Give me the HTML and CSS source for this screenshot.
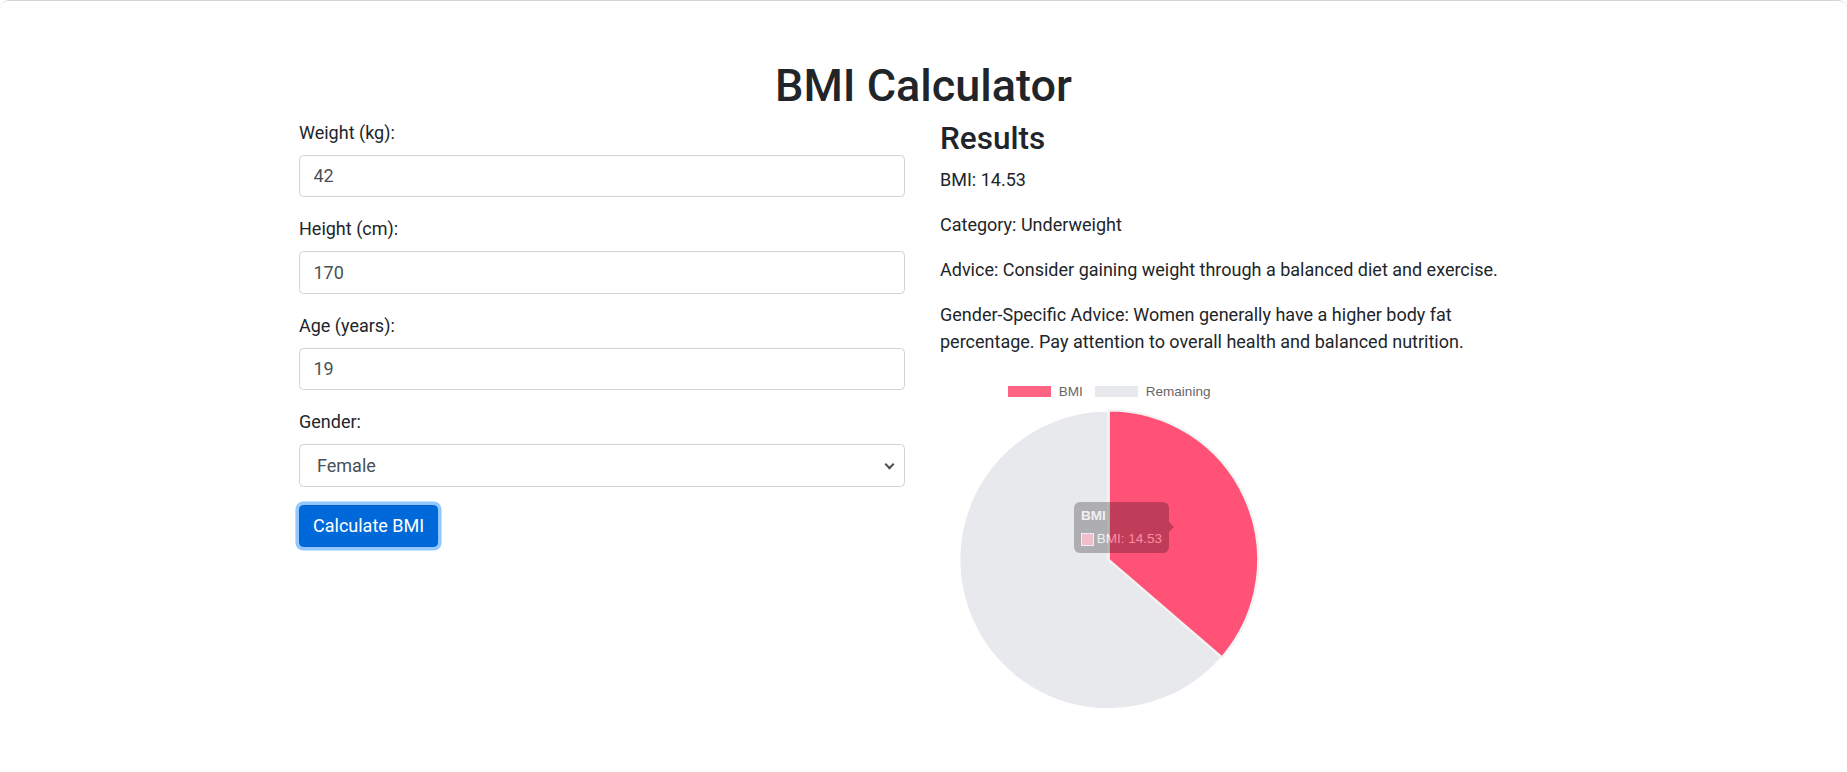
FILE: index.html
```html
<!DOCTYPE html>
<html lang="en">
<head>
<meta charset="utf-8">
<title>BMI Calculator</title>
<link rel="stylesheet" href="styles.css">
</head>
<body>
<div class="frame">
  <div class="container">
    <h1 class="title">BMI Calculator</h1>
    <div class="row">
      <div class="col">
        <form class="form">
          <div class="group">
            <label class="label" for="weight">Weight (kg):</label>
            <input class="control" id="weight" type="text" value="42">
          </div>
          <div class="group">
            <label class="label" for="height">Height (cm):</label>
            <input class="control" id="height" type="text" value="170">
          </div>
          <div class="group">
            <label class="label" for="age">Age (years):</label>
            <input class="control" id="age" type="text" value="19">
          </div>
          <div class="group">
            <label class="label" for="gender">Gender:</label>
            <div class="select-wrap">
              <select class="control select" id="gender">
                <option>Female</option>
                <option>Male</option>
              </select>
            </div>
          </div>
          <button class="btn" type="button">Calculate BMI</button>
        </form>
      </div>
      <div class="col">
        <h3 class="results-title">Results</h3>
        <p class="text">BMI: 14.53</p>
        <p class="text">Category: Underweight</p>
        <p class="text">Advice: Consider gaining weight through a balanced diet and exercise.</p>
        <p class="text">Gender-Specific Advice: Women generally have a higher body fat percentage. Pay attention to overall health and balanced nutrition.</p>
        <div class="chart">
          <div class="legend">
            <div class="legend-item"><span class="legend-box box-bmi"></span><span>BMI</span></div>
            <div class="legend-item"><span class="legend-box box-rem"></span><span>Remaining</span></div>
          </div>
          <svg class="pie" width="337.5" height="301.5" viewBox="0 0 337.5 301.5">
            <path d="M168.75,150.75 L281.98,248.39 A149.5,149.5 0 1,1 168.75,1.25 Z" fill="#e8e9ed" stroke="#ffffff" stroke-width="2.25" stroke-linejoin="round"/>
            <path d="M168.75,150.75 L168.75,1.25 A149.5,149.5 0 0,1 281.98,248.39 Z" fill="#ff5276" stroke="#f2f2f2" stroke-width="2.25" stroke-linejoin="round"/>
          </svg>
          <div class="tooltip">
            <div class="tooltip-title">BMI</div>
            <div class="tooltip-body"><span class="tooltip-box"></span><span>BMI: 14.53</span></div>
          </div>
        </div>
      </div>
    </div>
  </div>
</div>
</body>
</html>
```
FILE: styles.css
```css
html {
  font-size: 18px;
}

body {
  margin: 0;
  font-family: "Segoe UI", Roboto, "Helvetica Neue", Arial, sans-serif;
  font-size: 18px;
  line-height: 1.5;
  color: #212529;
  background: #ffffff;
}

.frame {
  border-top: 1px solid #d4d4d4;
  border-radius: 9px 9px 0 0;
  min-height: 771px;
}

.container {
  width: 1249px;
  margin: 0 auto;
  padding-top: 57.5px;
}

.title {
  margin: 0 0 6px;
  font-size: 45px;
  font-weight: 500;
  line-height: 1.2;
  text-align: center;
}

.row {
  display: grid;
  grid-template-columns: 606px 608px;
  column-gap: 35px;
}

.group {
  margin-bottom: 18px;
}

.label {
  display: inline-block;
  margin-bottom: 9px;
}

.control {
  display: block;
  width: 100%;
  height: 42.5px;
  box-sizing: border-box;
  padding: 6.75px 13.5px;
  font-family: inherit;
  font-size: 18px;
  line-height: 1.5;
  color: #495057;
  background: #ffffff;
  border: 1px solid #ced4da;
  border-radius: 4.5px;
  outline: none;
}

.select-wrap {
  position: relative;
}

.select {
  appearance: none;
  -webkit-appearance: none;
  padding-left: 17px;
}

.select-wrap::after {
  content: "";
  position: absolute;
  right: 12px;
  top: 16.5px;
  width: 5px;
  height: 5px;
  border-right: 2px solid #4d4d4d;
  border-bottom: 2px solid #4d4d4d;
  transform: rotate(45deg);
  pointer-events: none;
}

.btn {
  display: inline-block;
  padding: 6.75px 13px;
  font-family: inherit;
  font-size: 18px;
  line-height: 1.5;
  color: #ffffff;
  background: #0069d9;
  border: 1px solid #0062cc;
  border-radius: 4.5px;
  box-shadow: 0 0 0 3.6px rgba(38, 143, 255, 0.5);
  cursor: pointer;
}

.results-title {
  margin: 1px 0 9px;
  font-size: 31.5px;
  font-weight: 500;
  line-height: 1.2;
}

.text {
  margin: 0 0 18px;
}

.chart {
  position: relative;
  width: 337.5px;
}

.legend {
  display: flex;
  justify-content: center;
  gap: 11.25px;
  padding: 11.25px 0;
  font-family: "Liberation Sans", Arial, sans-serif;
  font-size: 13.5px;
  line-height: 13.5px;
  color: #666666;
}

.legend-item {
  display: flex;
  align-items: center;
  gap: 6.75px;
}

.legend-box {
  display: block;
  width: 45px;
  height: 13.5px;
  box-sizing: border-box;
  border: 1.1px solid #ffffff;
}

.box-bmi {
  background: #ff6384;
}

.box-rem {
  background: #e8e9ed;
}

.pie {
  display: block;
}

.tooltip {
  position: absolute;
  left: 134px;
  top: 129px;
  width: 95px;
  height: 51px;
  box-sizing: border-box;
  padding: 6px 7px;
  background: rgba(0, 0, 0, 0.8);
  border-radius: 6px;
  opacity: 0.31;
  color: #ffffff;
  font-family: "Liberation Sans", Arial, sans-serif;
  font-size: 13.5px;
  line-height: 16px;
}

.tooltip::after {
  content: "";
  position: absolute;
  left: 100%;
  top: 25px;
  margin-top: -5.6px;
  border-top: 5.6px solid transparent;
  border-bottom: 5.6px solid transparent;
  border-left: 5.6px solid rgba(0, 0, 0, 0.8);
}

.tooltip-title {
  font-weight: bold;
  margin-bottom: 7px;
}

.tooltip-body {
  display: flex;
  align-items: center;
  gap: 3px;
  white-space: nowrap;
}

.tooltip-box {
  display: block;
  width: 13px;
  height: 13px;
  box-sizing: border-box;
  border: 1.5px solid #ffffff;
  background: #ff6384;
}
```
